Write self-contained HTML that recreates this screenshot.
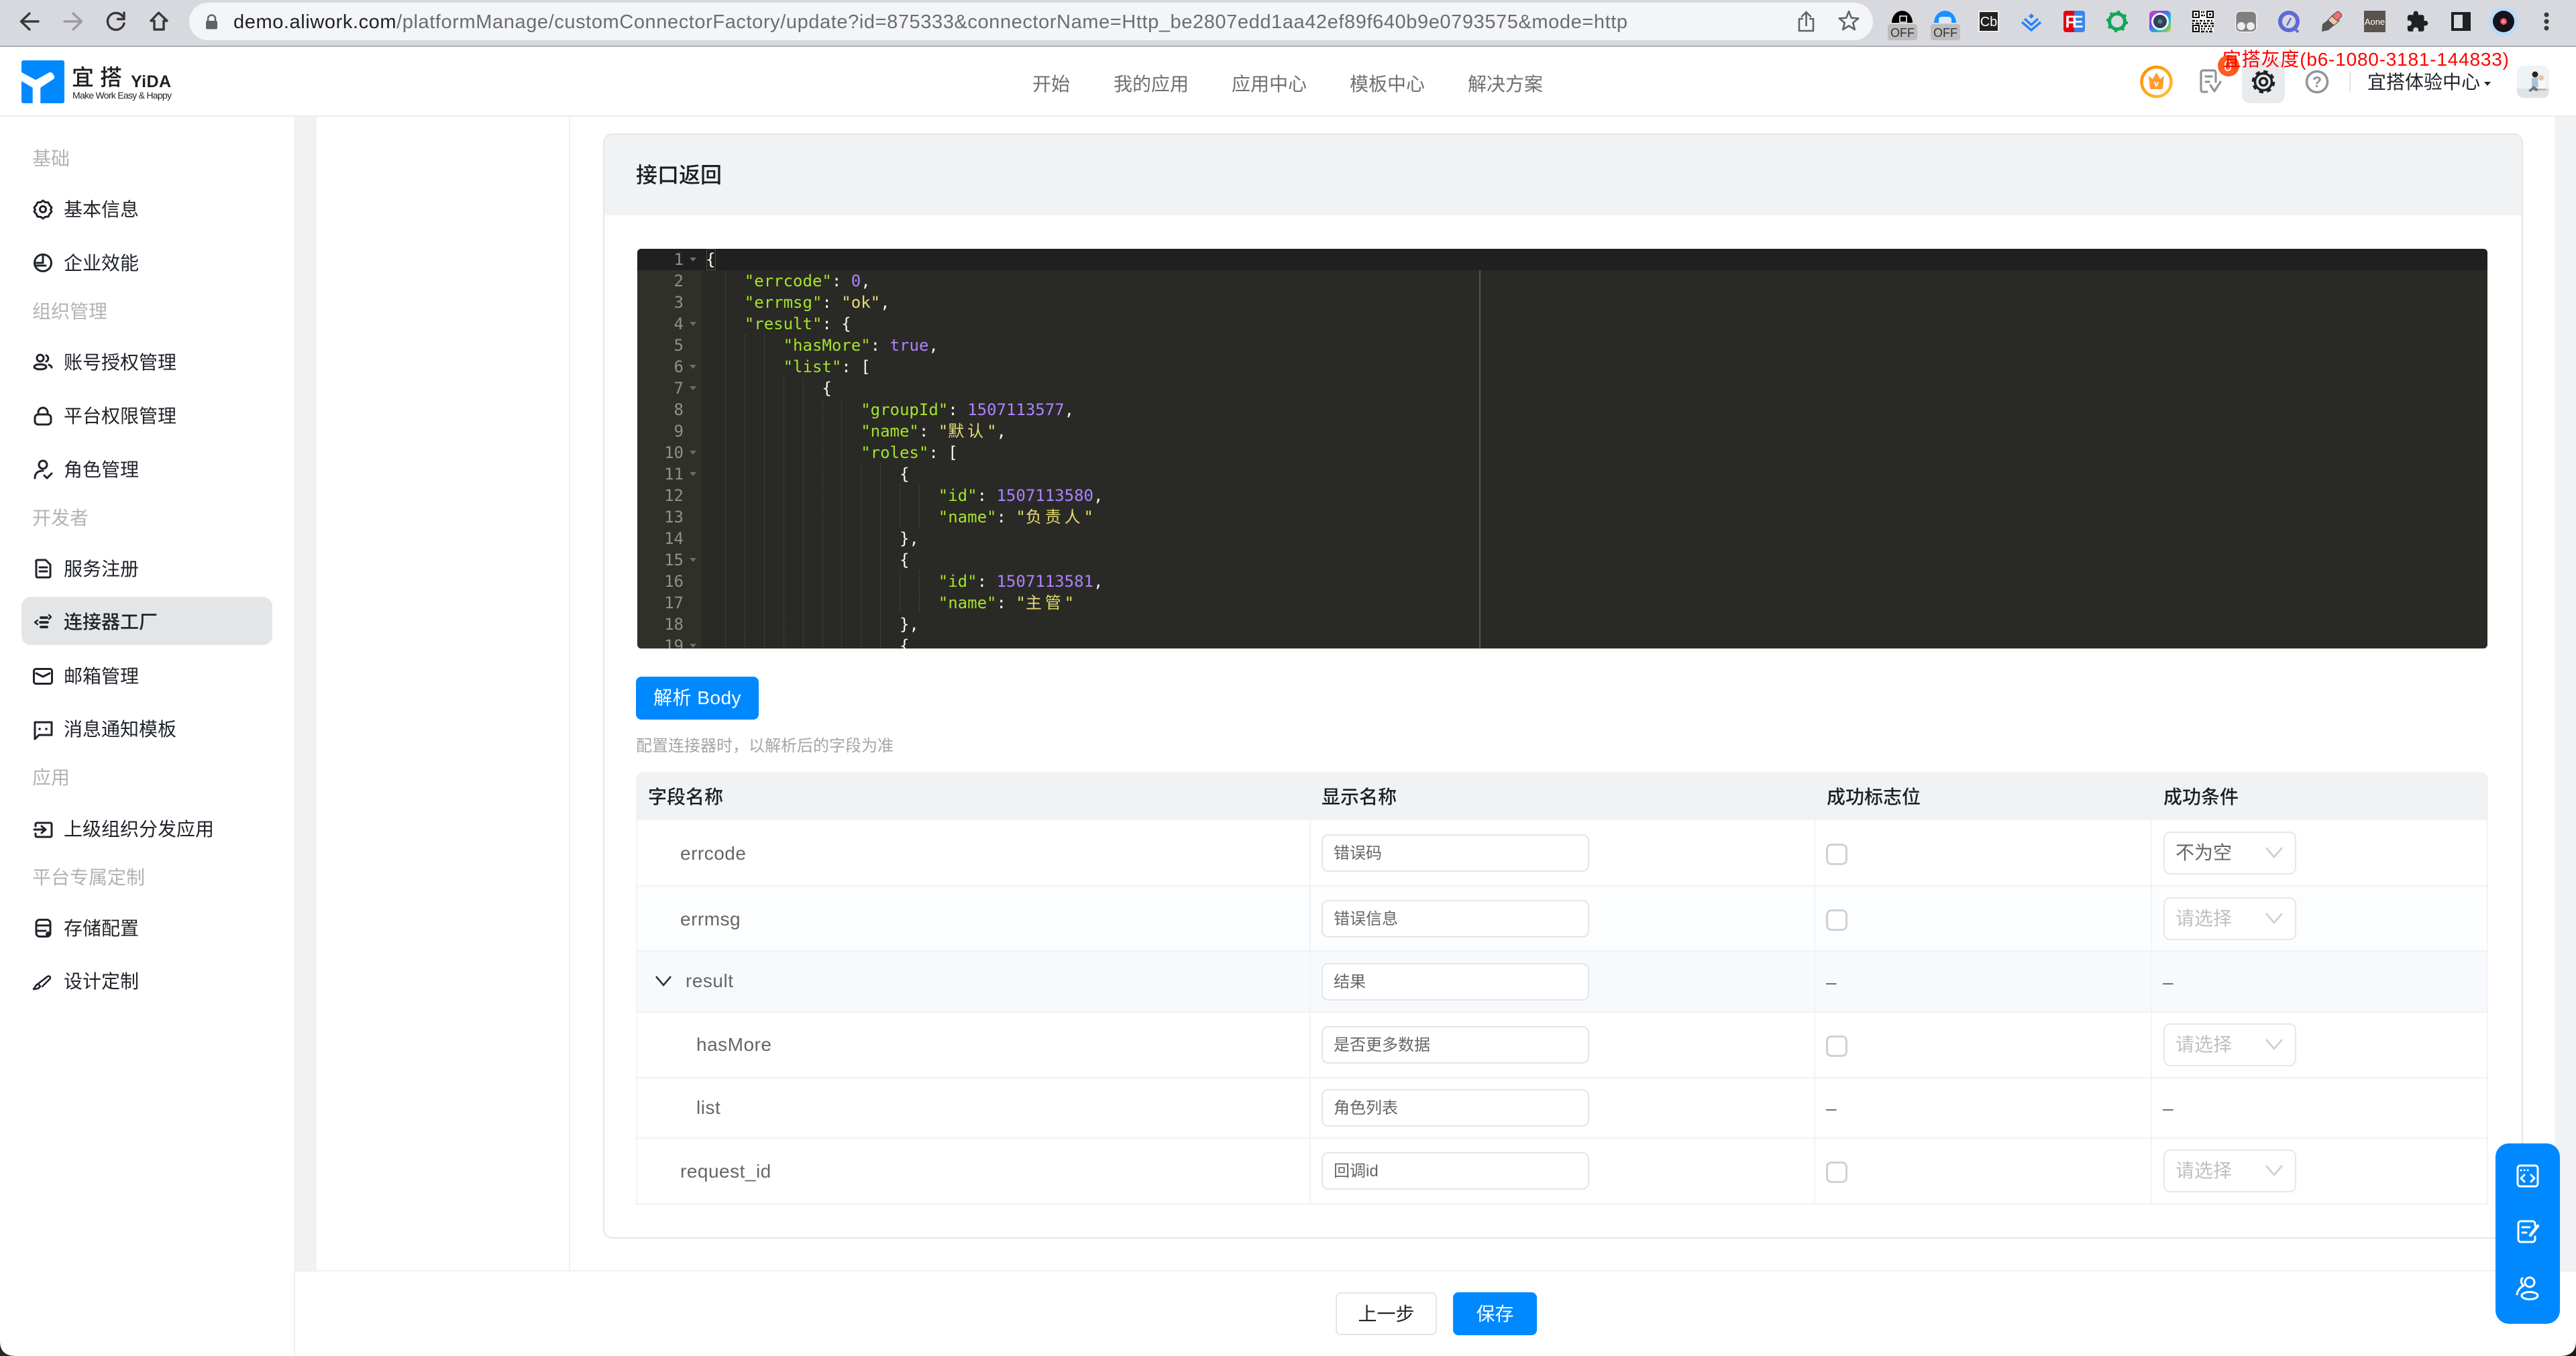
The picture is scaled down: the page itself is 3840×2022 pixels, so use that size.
<!DOCTYPE html>
<html lang="zh"><head><meta charset="utf-8"><title>宜搭</title>
<style>
html,body{margin:0;padding:0;background:#fff;width:3840px;height:2022px;overflow:hidden}
body{position:relative;font-family:"Liberation Sans","Noto Sans CJK SC",sans-serif;color:#1f2329}
div{box-sizing:border-box}
.a{position:absolute}
.t{position:absolute;white-space:nowrap;line-height:40px;height:40px;font-size:28px}
.g{color:#b2b3b5}
.hd{font-weight:500;color:#1b1e23}
.fn{color:#666;letter-spacing:.5px}
.in{position:absolute;left:1970px;width:399px;height:56px;border:2px solid #e4e5e7;border-radius:10px;background:#fff;font-size:24px;line-height:54px;padding-left:16px;color:#666;white-space:nowrap}
.ck{position:absolute;left:2722px;width:32px;height:32px;border:3px solid #cfd2d5;border-radius:8px;background:#fff}
.se{position:absolute;left:3225px;width:198px;height:64px;border:2px solid #e6e7e9;border-radius:10px;background:#fff;font-size:28px;line-height:60px;padding-left:16px;color:#bfc0c2}
.rw{position:absolute;left:948px;width:2761px;border-bottom:2px solid #f0f1f3}
.cl{position:absolute;width:2px;top:1223px;height:574px;background:#f2f3f5}
#ed{position:absolute;left:950px;top:371px;width:2758px;height:596px;background:#292a25;border-radius:6px;overflow:hidden;font-family:"DejaVu Sans Mono","Noto Sans CJK SC",monospace;font-size:24px;line-height:32px}
.l{position:absolute;left:102px;white-space:pre;color:#f8f8f2;height:32px}
.n{position:absolute;left:0;width:69px;text-align:right;color:#8f908a;height:32px}
.f{position:absolute;left:78px;width:0;height:0;border-left:5px solid transparent;border-right:5px solid transparent;border-top:6px solid #6c6d67}
.v{position:absolute;width:1px;background:repeating-linear-gradient(#4c4d47 0 2px,transparent 2px 4px)}
.k{color:#a6e22e}.s{color:#e6db74}.m{color:#ae81ff}.c{letter-spacing:4.9px}
</style></head><body>

<div class="a" style="left:0;top:0;width:3840px;height:68px;background:#d8d9de"></div>
<div class="a" style="left:0;top:68px;width:3840px;height:2px;background:#aeafb3"></div>
<div class="a" style="left:282px;top:4px;width:2510px;height:56px;background:#f4f5f7;border-radius:28px"></div>
<div class="a" style="left:0;top:172px;width:3840px;height:2px;background:#ecedef"></div>

<div class="a" style="left:438px;top:174px;width:34px;height:1720px;background:#f1f2f4"></div>
<div class="a" style="left:3808px;top:174px;width:32px;height:1720px;background:#f1f2f4"></div>
<div class="a" style="left:848px;top:174px;width:2px;height:1720px;background:#f0f1f3"></div>
<div class="a" style="left:438px;top:1894px;width:3402px;height:2px;background:#eff0f2"></div>
<div class="a" style="left:438px;top:1894px;width:2px;height:128px;background:#eff0f2"></div>

<div class="t" style="left:1539px;top:106px;color:#6f7074">开始</div>
<div class="t" style="left:1660px;top:106px;color:#6f7074">我的应用</div>
<div class="t" style="left:1836px;top:106px;color:#6f7074">应用中心</div>
<div class="t" style="left:2012px;top:106px;color:#6f7074">模板中心</div>
<div class="t" style="left:2188px;top:106px;color:#6f7074">解决方案</div>
<div class="t" style="left:3529px;top:103px">宜搭体验中心</div>

<div class="t g" style="left:48px;top:217px">基础</div>
<div class="t" style="left:95px;top:293px">基本信息</div>
<div class="t" style="left:95px;top:373px">企业效能</div>
<div class="t g" style="left:48px;top:445px">组织管理</div>
<div class="t" style="left:95px;top:521px">账号授权管理</div>
<div class="t" style="left:95px;top:601px">平台权限管理</div>
<div class="t" style="left:95px;top:681px">角色管理</div>
<div class="t g" style="left:48px;top:753px">开发者</div>
<div class="t" style="left:95px;top:829px">服务注册</div>
<div class="a" style="left:32px;top:890px;width:374px;height:72px;background:#e4e5e7;border-radius:14px"></div>
<div class="t" style="left:95px;top:908px;font-weight:500">连接器工厂</div>
<div class="t" style="left:95px;top:989px">邮箱管理</div>
<div class="t" style="left:95px;top:1068px">消息通知模板</div>
<div class="t g" style="left:48px;top:1140px">应用</div>
<div class="t" style="left:95px;top:1217px">上级组织分发应用</div>
<div class="t g" style="left:48px;top:1289px">平台专属定制</div>
<div class="t" style="left:95px;top:1365px">存储配置</div>
<div class="t" style="left:95px;top:1444px">设计定制</div>

<div class="a" style="left:899px;top:199px;width:2862px;height:1648px;border:2px solid #e4e5e7;border-radius:14px;background:#fff"></div>
<div class="a" style="left:901px;top:201px;width:2858px;height:120px;background:#f1f2f4;border-radius:12px 12px 0 0"></div>
<div class="t" style="left:948px;top:241px;font-size:32px;font-weight:500;color:#1b1e23">接口返回</div>

<div id="ed">
<div class="a" style="left:0;top:0;width:96px;height:596px;background:#2f3129"></div>
<div class="a" style="left:0;top:0;width:2758px;height:32px;background:#202020"></div>
<div class="a" style="left:1255px;top:32px;width:2px;height:564px;background:#555650"></div>
<div class="a" style="left:103px;top:0;width:14px;height:32px;border:1px solid #49483e"></div>
<div class="v" style="left:131px;top:32px;height:564px"></div>
<div class="v" style="left:160px;top:128px;height:468px"></div>
<div class="v" style="left:189px;top:128px;height:468px"></div>
<div class="v" style="left:218px;top:192px;height:404px"></div>
<div class="v" style="left:247px;top:192px;height:404px"></div>
<div class="v" style="left:276px;top:224px;height:372px"></div>
<div class="v" style="left:304px;top:224px;height:372px"></div>
<div class="v" style="left:333px;top:320px;height:276px"></div>
<div class="v" style="left:362px;top:320px;height:276px"></div>
<div class="v" style="left:391px;top:352px;height:64px"></div>
<div class="v" style="left:420px;top:352px;height:64px"></div>
<div class="v" style="left:391px;top:480px;height:64px"></div>
<div class="v" style="left:420px;top:480px;height:64px"></div>
<div class="n" style="top:0">1</div><div class="n" style="top:32px">2</div><div class="n" style="top:64px">3</div><div class="n" style="top:96px">4</div><div class="n" style="top:128px">5</div><div class="n" style="top:160px">6</div><div class="n" style="top:192px">7</div><div class="n" style="top:224px">8</div><div class="n" style="top:256px">9</div><div class="n" style="top:288px">10</div><div class="n" style="top:320px">11</div><div class="n" style="top:352px">12</div><div class="n" style="top:384px">13</div><div class="n" style="top:416px">14</div><div class="n" style="top:448px">15</div><div class="n" style="top:480px">16</div><div class="n" style="top:512px">17</div><div class="n" style="top:544px">18</div><div class="n" style="top:576px">19</div>
<div class="f" style="top:13px"></div><div class="f" style="top:109px"></div><div class="f" style="top:173px"></div><div class="f" style="top:205px"></div><div class="f" style="top:301px"></div><div class="f" style="top:333px"></div><div class="f" style="top:461px"></div><div class="f" style="top:589px"></div>
<div class="l" style="top:0">{</div>
<div class="l" style="top:32px">    <span class="k">"errcode"</span>: <span class="m">0</span>,</div>
<div class="l" style="top:64px">    <span class="k">"errmsg"</span>: <span class="s">"ok"</span>,</div>
<div class="l" style="top:96px">    <span class="k">"result"</span>: {</div>
<div class="l" style="top:128px">        <span class="k">"hasMore"</span>: <span class="m">true</span>,</div>
<div class="l" style="top:160px">        <span class="k">"list"</span>: [</div>
<div class="l" style="top:192px">            {</div>
<div class="l" style="top:224px">                <span class="k">"groupId"</span>: <span class="m">1507113577</span>,</div>
<div class="l" style="top:256px">                <span class="k">"name"</span>: <span class="s">"<span class="c">默认</span>"</span>,</div>
<div class="l" style="top:288px">                <span class="k">"roles"</span>: [</div>
<div class="l" style="top:320px">                    {</div>
<div class="l" style="top:352px">                        <span class="k">"id"</span>: <span class="m">1507113580</span>,</div>
<div class="l" style="top:384px">                        <span class="k">"name"</span>: <span class="s">"<span class="c">负责人</span>"</span></div>
<div class="l" style="top:416px">                    },</div>
<div class="l" style="top:448px">                    {</div>
<div class="l" style="top:480px">                        <span class="k">"id"</span>: <span class="m">1507113581</span>,</div>
<div class="l" style="top:512px">                        <span class="k">"name"</span>: <span class="s">"<span class="c">主管</span>"</span></div>
<div class="l" style="top:544px">                    },</div>
<div class="l" style="top:576px">                    {</div>
</div>

<div class="a" style="left:948px;top:1009px;width:183px;height:64px;background:#0089ff;border-radius:8px;color:#fff;font-size:28px;line-height:64px;text-align:center;letter-spacing:.5px">解析 Body</div>
<div class="t" style="left:948px;top:1093px;font-size:24px;color:#a4a5a8">配置连接器时，以解析后的字段为准</div>

<div class="a" style="left:948px;top:1151px;width:2761px;height:72px;background:#f1f2f4;border-radius:12px 12px 0 0"></div>
<div class="t hd" style="left:966px;top:1169px">字段名称</div>
<div class="t hd" style="left:1970px;top:1169px">显示名称</div>
<div class="t hd" style="left:2723px;top:1169px">成功标志位</div>
<div class="t hd" style="left:3225px;top:1169px">成功条件</div>

<div class="rw" style="top:1223px;height:99px;background:#fff"></div>
<div class="rw" style="top:1322px;height:97px;background:#fcfdfe"></div>
<div class="rw" style="top:1419px;height:91px;background:#f7fafd"></div>
<div class="rw" style="top:1510px;height:98px;background:#fff"></div>
<div class="rw" style="top:1608px;height:90px;background:#fff"></div>
<div class="rw" style="top:1698px;height:98px;background:#fff"></div>
<div class="cl" style="left:948px"></div><div class="cl" style="left:1952px"></div><div class="cl" style="left:2704px"></div><div class="cl" style="left:3206px"></div><div class="cl" style="left:3707px"></div>

<div class="t fn" style="left:1014px;top:1253px">errcode</div>
<div class="t fn" style="left:1014px;top:1351px">errmsg</div>
<div class="t fn" style="left:1022px;top:1443px">result</div>
<div class="t fn" style="left:1038px;top:1538px">hasMore</div>
<div class="t fn" style="left:1038px;top:1632px">list</div>
<div class="t fn" style="left:1014px;top:1727px">request_id</div>

<div class="in" style="top:1244px">错误码</div>
<div class="in" style="top:1342px">错误信息</div>
<div class="in" style="top:1436px">结果</div>
<div class="in" style="top:1530px">是否更多数据</div>
<div class="in" style="top:1624px">角色列表</div>
<div class="in" style="top:1718px">回调id</div>

<div class="ck" style="top:1258px"></div><div class="ck" style="top:1356px"></div><div class="ck" style="top:1544px"></div><div class="ck" style="top:1732px"></div>
<div class="t" style="left:2722px;top:1445px;color:#666">–</div>
<div class="t" style="left:3224px;top:1445px;color:#666">–</div>
<div class="t" style="left:2722px;top:1633px;color:#666">–</div>
<div class="t" style="left:3224px;top:1633px;color:#666">–</div>

<div class="se" style="top:1240px;color:#666">不为空</div>
<div class="se" style="top:1338px">请选择</div>
<div class="se" style="top:1526px">请选择</div>
<div class="se" style="top:1714px">请选择</div>

<div class="a" style="left:1991px;top:1927px;width:151px;height:64px;border:2px solid #e4e5e7;border-radius:8px;background:#fff;font-size:28px;line-height:62px;text-align:center">上一步</div>
<div class="a" style="left:2166px;top:1927px;width:125px;height:64px;background:#0089ff;border-radius:8px;color:#fff;font-size:28px;line-height:66px;text-align:center">保存</div>

<div class="a" style="left:3720px;top:1705px;width:96px;height:269px;background:#0089ff;border-radius:20px"></div>

<svg class="a" style="left:0;top:0" width="3840" height="2022" viewBox="0 0 3840 2022" xmlns="http://www.w3.org/2000/svg" font-family="Liberation Sans, Noto Sans CJK SC, sans-serif">
<defs>
<linearGradient id="rb" x1="0" y1="0" x2="1" y2="1"><stop offset="0" stop-color="#e040c0"/><stop offset=".35" stop-color="#6a4cf0"/><stop offset=".7" stop-color="#10c8c8"/><stop offset="1" stop-color="#f0c020"/></linearGradient>
<linearGradient id="og" x1="0" y1="0" x2="1" y2="1"><stop offset="0" stop-color="#ff8a00"/><stop offset="1" stop-color="#ffc233"/></linearGradient>
<clipPath id="av"><rect x="3752" y="98" width="48" height="48" rx="10"/></clipPath>
</defs>

<!-- nav buttons -->
<g fill="none" stroke-width="3.4" stroke-linecap="round" stroke-linejoin="round">
<path d="M57 32H32M44 20 31.5 32 44 44" stroke="#37383c"/>
<path d="M96 32h25M109 20l12.500 12L109 44" stroke="#9a9ba0"/>
<path d="M183 24.500A12.500 12.500 0 1 0 185 35" stroke="#37383c"/>
<path d="M185 19v9.500h-9.500" stroke="#37383c"/>
<path d="M236.500 19 225 31h5v13h14V31h5z" stroke="#37383c"/>
</g>
<rect x="307" y="31" width="17" height="12.500" rx="2" fill="#606368"/>
<path d="M310 31v-3a5.500 5.500 0 0 1 11 0v3" fill="none" stroke="#606368" stroke-width="2.500"/>

<text x="348" y="42" font-size="29" textLength="2078" lengthAdjust="spacing" fill="#6b6d70"><tspan fill="#202124">demo.aliwork.com</tspan>/platformManage/customConnectorFactory/update?id=875333&amp;connectorName=Http_be2807edd1aa42ef89f640b9e0793575&amp;mode=http</text>

<!-- share / star -->
<g fill="none" stroke="#5f6368" stroke-width="2.600" stroke-linecap="round" stroke-linejoin="round">
<path d="M2687 28h-5v18h21V28h-5M2692.500 38V19M2686 24.500l6.500-6.500 6.500 6.500"/>
<polygon points="2756,17 2759.800,26.700 2770.300,27.400 2762.200,34 2764.800,44.100 2756,38.500 2747.200,44.100 2749.800,34 2741.700,27.400 2752.200,26.700"/>
</g>

<!-- extensions -->
<path d="M2820 34a15.500 18 0 0 1 31 0z" fill="#000"/><rect x="2832" y="24" width="10" height="9" fill="none" stroke="#fff" stroke-width="1.500"/>
<rect x="2814" y="36" width="44" height="24" rx="4" fill="#bdbdbd"/><text x="2836" y="55" font-size="18" text-anchor="middle" fill="#333">OFF</text>
<path d="M2883 34a16.500 18 0 0 1 33 0z" fill="#1a90ff"/><path d="M2890 34v-5a4 4 0 0 1 4-4h11a4 4 0 0 1 4 4v5z" fill="#d8e8f8"/>
<rect x="2878" y="36" width="44" height="24" rx="4" fill="#bdbdbd"/><text x="2900" y="55" font-size="18" text-anchor="middle" fill="#333">OFF</text>
<rect x="2949" y="16" width="31" height="32" fill="#f0f0f0"/><rect x="2951" y="18" width="27" height="28" fill="#222"/><text x="2964.500" y="39" font-size="20" text-anchor="middle" fill="#fff">Cb</text>
<path d="M3028 20l4 4-4 4-4-4z" fill="#2684ff"/>
<path d="M3018 28l10 9 10-9M3014 33l14 12 14-12" fill="none" stroke="#2684ff" stroke-width="3.500"/>
<rect x="3076" y="16" width="32" height="32" rx="4" fill="#3a86e8"/><path d="M3080 16h12v32h-12a4 4 0 0 1-4-4V20a4 4 0 0 1 4-4z" fill="#e60012"/>
<text x="3092" y="41" font-size="25" font-weight="700" text-anchor="middle" fill="#fff" textLength="27">FE</text>
<circle cx="3156" cy="32" r="11.500" fill="none" stroke="#0ca75a" stroke-width="5"/><circle cx="3156" cy="32" r="14.500" fill="none" stroke="#0ca75a" stroke-width="3.500" stroke-dasharray="4 7.400"/>
<rect x="3204" y="16" width="32" height="32" rx="6" fill="url(#rb)"/><circle cx="3220" cy="32" r="13" fill="#f5f5f5"/><circle cx="3220" cy="32" r="10" fill="#2c4257"/><circle cx="3220" cy="32" r="3.500" fill="#5a7a92"/>
<rect x="3268" y="16" width="32" height="32" fill="#fff"/>
<g fill="#000"><rect x="3268" y="16" width="11" height="11"/><rect x="3289" y="16" width="11" height="11"/><rect x="3268" y="37" width="11" height="11"/></g>
<g fill="#fff"><rect x="3270" y="18" width="7" height="7"/><rect x="3291" y="18" width="7" height="7"/><rect x="3270" y="39" width="7" height="7"/></g>
<g fill="#000"><rect x="3272" y="20" width="3" height="3"/><rect x="3293" y="20" width="3" height="3"/><rect x="3272" y="41" width="3" height="3"/></g>
<g stroke="#000" stroke-width="2.500" fill="none"><path d="M3281 18h6" stroke-dasharray="2 1"/><path d="M3281 23h6" stroke-dasharray="3 1"/><path d="M3268 31h32" stroke-dasharray="4 2 2 3"/><path d="M3268 35h32" stroke-dasharray="2 3 5 1"/><path d="M3281 39h19" stroke-dasharray="3 2 4 2"/><path d="M3281 43h19" stroke-dasharray="2 2 2 4"/><path d="M3281 47h19" stroke-dasharray="5 2 3 2"/></g>
<rect x="3332.700" y="16.700" width="31" height="31" rx="7" fill="#808080" stroke="#f0f0f0" stroke-width="1.500"/><circle cx="3341" cy="39" r="6" fill="#eee"/><circle cx="3355" cy="39" r="6" fill="#eee"/>
<circle cx="3412" cy="32" r="13" fill="#d8d9de" stroke="#5f69d6" stroke-width="6"/><path d="M3409 38l6-11" stroke="#5f69d6" stroke-width="2.500"/><path d="M3419 41l7 7" stroke="#5f69d6" stroke-width="4"/>
<path d="M3461 47l1-11 8-6 9 8-8 7z" fill="#555"/><path d="M3470 30l8-8 9 9-8 7z" fill="#f2c6a8" stroke="#444" stroke-width="1"/><path d="M3476 24l7-6a3 3 0 0 1 4 0l3 3a3 3 0 0 1 0 4l-6 6z" fill="#f27070" stroke="#444" stroke-width="1"/>
<rect x="3524" y="16" width="32" height="32" fill="#5a534d"/><text x="3540" y="37" font-size="13" text-anchor="middle" fill="#fff">Aone</text>
<path transform="translate(3586 15) scale(1.45)" fill="#1f2023" d="M20.500 11H19V7c0-1.100-.9-2-2-2h-4V3.500C13 2.120 11.880 1 10.500 1S8 2.120 8 3.500V5H4c-1.100 0-1.990.9-1.990 2v3.800H3.500c1.490 0 2.700 1.210 2.700 2.700s-1.210 2.700-2.700 2.700H2V20c0 1.100.9 2 2 2h3.800v-1.500c0-1.490 1.210-2.700 2.700-2.700 1.490 0 2.700 1.210 2.700 2.700V22H17c1.100 0 2-.9 2-2v-4h1.500c1.380 0 2.500-1.120 2.500-2.500S21.880 11 20.500 11z"/>
<rect x="3654" y="18" width="29" height="28" fill="#1f2023"/><rect x="3658" y="22" width="13" height="20" fill="#d8d9de"/>
<circle cx="3732" cy="32" r="21.500" fill="#b8dbf8"/><circle cx="3732" cy="32" r="16" fill="#15131c"/><circle cx="3732" cy="32" r="5" fill="#f0507a"/><circle cx="3732" cy="32" r="1.800" fill="#f5d020"/>
<g fill="#37383b"><circle cx="3796" cy="22" r="3.500"/><circle cx="3796" cy="32" r="3.500"/><circle cx="3796" cy="42" r="3.500"/></g>

<!-- logo -->
<rect x="32" y="90" width="64" height="64" rx="3" fill="#0089ff"/>
<path d="M32 107.700 53.300 119.300 73 108.300a4 4 0 0 1 5.500 1.500l2 3a4 4 0 0 1-1.300 5.500L60.300 130.700V154H48.700V130.700L32 121z" fill="#fff"/>
<text x="107" y="127" font-size="33" font-weight="500" fill="#1f2024" letter-spacing="9">宜搭</text>
<text x="195" y="130" font-size="25" font-weight="700" fill="#1f2024" textLength="60">YiDA</text>
<text x="108" y="147" font-size="14" fill="#1f2024" textLength="148">Make Work Easy &amp; Happy</text>

<!-- header right -->
<circle cx="3214.500" cy="122" r="22" fill="#fff" stroke="url(#og)" stroke-width="4.500"/>
<path d="M3203 113l6 5 5.500-10 5.500 10 6-5-2 18a2 2 0 0 1-2 2h-15a2 2 0 0 1-2-2z" fill="#ff9c2e"/>
<text x="3214.500" y="129" font-size="13" font-weight="700" text-anchor="middle" fill="#fff">v</text>
<path d="M3303 122v-14a3 3 0 0 0-3-3h-16a3 3 0 0 0-3 3v26a3 3 0 0 0 3 3h6M3288 114h9M3288 122h5M3295 127l6 9 9-14" fill="none" stroke="#8f9499" stroke-width="3.200" stroke-linecap="round" stroke-linejoin="round"/>
<rect x="3342" y="90" width="64" height="64" rx="12" fill="#e9eaec"/>
<circle cx="3322" cy="98" r="16" fill="#ff5a1f"/>
<text x="3321" y="106" font-size="22" text-anchor="middle" fill="#fff">0</text>
<circle cx="3374" cy="122" r="12.500" fill="none" stroke="#1f2329" stroke-width="3.600"/><circle cx="3374" cy="122" r="15.500" fill="none" stroke="#1f2329" stroke-width="3.600" stroke-dasharray="6.500 5.670"/><circle cx="3374" cy="122" r="5.500" fill="none" stroke="#1f2329" stroke-width="3.600"/>
<circle cx="3454" cy="122" r="15.500" fill="none" stroke="#8f9499" stroke-width="3.500"/><text x="3454" y="130" font-size="23" font-weight="700" text-anchor="middle" fill="#8f9499">?</text>
<rect x="3502" y="106" width="2" height="32" fill="#e4e5e7"/>
<path d="M3703 122h10l-5 6z" fill="#1f2329"/>
<g clip-path="url(#av)"><rect x="3752" y="98" width="48" height="48" fill="#eef3f6"/><rect x="3752" y="132" width="48" height="14" fill="#dfe3e6"/>
<circle cx="3779" cy="111" r="4.500" fill="#2a2320"/><circle cx="3788" cy="116" r="4" fill="#e5c3ad"/><path d="M3774 116h9l1 14h-10z" fill="#a8c4d8"/><path d="M3784 120h9l2 12h-11z" fill="#f8f8f8"/><path d="M3769 135l8-7 8 6-4 2-5-2-4 3z" fill="#6b7a8a"/><path d="M3784 132h11l2 3h-13z" fill="#c9b7a8"/></g>
<text x="3313" y="98" font-size="28" fill="#f00" letter-spacing=".8">宜搭灰度(b6-1080-3181-144833)</text>

<!-- sidebar icons -->
<g fill="none" stroke="#1f2329" stroke-width="3" stroke-linecap="round" stroke-linejoin="round">
<path d="M64 299l3 2.500 5 .5 2 4 3 3.500-1.500 3 1.500 3-3 3.500-2 4-5 .5-3 2.500-3-2.500-5-.5-2-4-3-3.500 1.500-3-1.500-3 3-3.500 2-4 5-.5z"/><circle cx="64" cy="312" r="4.500"/>
<circle cx="64" cy="392" r="12.500"/><path d="M64 380v12H52M52 396h16"/>
<circle cx="60" cy="534" r="5"/><ellipse cx="60" cy="547" rx="9" ry="3.800"/><path d="M69 530a5 5 0 0 1 0 9M73 544c3 1 4 3 4 4"/>
<rect x="52" y="618" width="24" height="15" rx="5"/><path d="M57 618v-3a7 7 0 0 1 14 0v3"/>
<circle cx="64" cy="693" r="6"/><path d="M52 713c0-7 4-11 12-11M66 709l4 4 7-7"/>
<path d="M56 835h12l7 7v17a2 2 0 0 1-2 2H56a2 2 0 0 1-2-2V838a2 2 0 0 1 2-3zM59 846h11M59 852h11"/>
<path d="M61 921h9M60 928h11M61 935h9" stroke-width="3.800"/><path d="M56 925l-4 3 4 3M73 917l3 3-3 3" stroke-width="2.400"/>
<rect x="50.500" y="997.500" width="27" height="22" rx="3"/><path d="M54 1004l10 5 10-5"/>
<path d="M52 1077h25v19H58l-6 6z"/><path d="M59 1087h.1M69 1087h.1" stroke-width="3.600"/>
<path d="M53 1232v-3a2 2 0 0 1 2-2h20a2 2 0 0 1 2 2v17a2 2 0 0 1-2 2H55a2 2 0 0 1-2-2v-3M51 1237h16M62 1232l6 5-6 5"/>
<rect x="54" y="1371.500" width="21" height="25" rx="5"/><path d="M54 1380h21M54 1388h14"/>
<circle cx="72" cy="1393" r="2.500" fill="#1f2329"/>
<path d="M50 1475c4 0 8-1 10-4l-3-4c-3 1-4 4-7 8zM58 1466l13-10a2.500 2.500 0 0 1 3.500 3.500L63 1471" stroke-width="2.600"/>
</g>

<!-- table chevrons -->
<path d="M978 1456l11 13 11-13" fill="none" stroke="#333" stroke-width="2.600"/>
<g fill="none" stroke="#cdcfd2" stroke-width="2.600"><path d="M3378 1264l12 14 12-14"/><path d="M3378 1362l12 14 12-14"/><path d="M3378 1550l12 14 12-14"/><path d="M3378 1738l12 14 12-14"/></g>

<!-- float icons -->
<g fill="none" stroke="#fff" stroke-width="3" stroke-linecap="round" stroke-linejoin="round">
<rect x="3753" y="1738" width="30" height="31" rx="4"/><path d="M3758 1745h.1M3763 1745h.1M3768 1745h.1"/><path d="M3763 1752l-5 5 5 5M3773 1752l5 5-5 5"/>
<path d="M3779 1828v-3a4 4 0 0 0-4-4h-17a4 4 0 0 0-4 4v23a4 4 0 0 0 4 4h17a4 4 0 0 0 4-4v-4M3760 1830h11M3760 1838h6"/><path d="M3772 1842l11-14" stroke-width="4.500"/>
<circle cx="3771" cy="1912" r="7"/><ellipse cx="3771" cy="1932" rx="12" ry="5.500"/><path d="M3760 1906c-3 3-2 8 2 11-6 3-9 8-10 13"/>
</g>

<!-- window corners -->
<path d="M0 2000Q0 2022 24 2022H0z" fill="#2a2624"/>
<path d="M3840 2000Q3840 2022 3816 2022H3840z" fill="#1a1a1a"/>
</svg>
</body></html>
